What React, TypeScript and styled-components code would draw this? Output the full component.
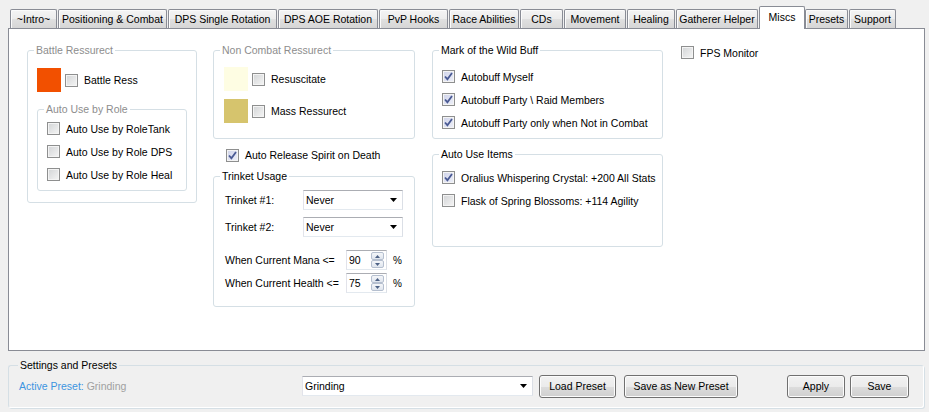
import React from 'react';
import styled, { createGlobalStyle } from 'styled-components';

const GlobalStyle = createGlobalStyle`
  html, body {
    margin: 0;
    padding: 0;
    background: #f0f0f0;
  }
  body {
    font-family: "Liberation Sans", Arial, sans-serif;
    font-size: 10.5px;
    color: #000000;
  }
  * {
    box-sizing: border-box;
  }
`;

const Window = styled.div`
  width: 929px;
  height: 412px;
  padding-top: 6px;
  display: flex;
  flex-direction: column;
  overflow: hidden;
  background: #f0f0f0;
`;

const TabStrip = styled.div`
  display: flex;
  align-items: flex-end;
  height: 22px;
  padding-left: 10px;
`;

const Tab = styled.div<{ $width: number; $active?: boolean; $gap: number }>`
  width: ${(p) => p.$width}px;
  height: ${(p) => (p.$active ? 23 : 19)}px;
  margin-right: ${(p) => p.$gap}px;
  margin-bottom: ${(p) => (p.$active ? -1 : 0)}px;
  padding-bottom: ${(p) => (p.$active ? 3 : 0)}px;
  border: 1px solid #898c95;
  border-bottom: none;
  border-radius: 2px 2px 0 0;
  background: ${(p) =>
    p.$active ? '#ffffff' : 'linear-gradient(#f4f4f4, #ececec 50%, #e0e0e0 50%, #d6d6d6)'};
  box-shadow: ${(p) => (p.$active ? 'none' : 'inset 1px 1px 0 #fbfbfb')};
  display: flex;
  align-items: center;
  justify-content: center;
  white-space: nowrap;
  position: relative;
  z-index: ${(p) => (p.$active ? 1 : 0)};
`;

const Panel = styled.div`
  margin-left: 8px;
  width: 917px;
  height: 323px;
  border: 1px solid #898c95;
  background: #ffffff;
  padding: 15px 0 0 18px;
  display: flex;
  align-items: flex-start;
`;

const Column = styled.div<{ $width?: number; $offset?: number }>`
  width: ${(p) => (p.$width ? `${p.$width}px` : 'auto')};
  margin-left: ${(p) => p.$offset ?? 0}px;
  display: flex;
  flex-direction: column;
`;

const Group = styled.fieldset<{ $height: number; $top?: number }>`
  margin: ${(p) => p.$top ?? 0}px 0 0 0;
  padding: 0;
  min-width: 0;
  width: 100%;
  height: ${(p) => p.$height}px;
  border: 1px solid #d5dfe5;
  border-radius: 3px;
`;

const Legend = styled.legend<{ $muted?: boolean; $inset?: number }>`
  margin-left: ${(p) => p.$inset ?? 6}px;
  padding: 0 2px;
  line-height: 13px;
  color: ${(p) => (p.$muted ? '#8d8d8d' : '#000000')};
`;

const GroupBody = styled.div<{ $pad: string }>`
  padding: ${(p) => p.$pad};
  display: flex;
  flex-direction: column;
`;

const CheckRow = styled.div<{ $height?: number; $top?: number; $indent?: number }>`
  display: flex;
  align-items: center;
  gap: 6px;
  height: ${(p) => p.$height ?? 23}px;
  margin-top: ${(p) => p.$top ?? 0}px;
  padding-left: ${(p) => p.$indent ?? 0}px;
  white-space: nowrap;
`;

const Box = styled.span<{ $checked?: boolean }>`
  width: 13px;
  height: 13px;
  flex: none;
  border: 1px solid #8e8f8f;
  box-shadow: inset 0 0 0 1px #f4f4f4;
  background: ${(p) =>
    p.$checked
      ? 'linear-gradient(135deg, #cfd3ea, #eef0f8)'
      : 'linear-gradient(135deg, #d2d4d6, #f5f5f5)'};
  display: flex;
  align-items: center;
  justify-content: center;
`;

const SwatchRow = styled.div<{ $top?: number }>`
  display: flex;
  align-items: center;
  gap: 4px;
  margin-top: ${(p) => p.$top ?? 0}px;
  white-space: nowrap;
`;

const Swatch = styled.span<{ $color: string }>`
  width: 24px;
  height: 24px;
  flex: none;
  background: ${(p) => p.$color};
`;

const SwatchLabel = styled.span`
  margin-left: 2px;
`;

const FieldRow = styled.div<{ $top?: number; $labelWidth: number }>`
  display: flex;
  align-items: center;
  height: 20px;
  margin-top: ${(p) => p.$top ?? 0}px;
  & > span:first-child {
    width: ${(p) => p.$labelWidth}px;
    flex: none;
    white-space: nowrap;
  }
`;

const Combo = styled.div<{ $width: number }>`
  width: ${(p) => p.$width}px;
  height: 20px;
  border: 1px solid #abadb3;
  border-color: #abadb3 #dbdfe6 #e3e9ef #e2e3ea;
  background: #ffffff;
  display: flex;
  align-items: center;
  justify-content: space-between;
  padding: 0 5px 0 2px;
`;

const Spin = styled.div`
  width: 41px;
  height: 20px;
  border: 1px solid #abadb3;
  border-color: #abadb3 #dbdfe6 #e3e9ef #e2e3ea;
  background: #ffffff;
  display: flex;
  align-items: center;
  justify-content: space-between;
  padding: 1px 2px 1px 2px;
`;

const SpinButtons = styled.div`
  width: 13px;
  height: 16px;
  display: flex;
  flex-direction: column;
`;

const SpinButton = styled.span`
  flex: 1;
  border: 1px solid #b5bfcf;
  border-radius: 2px;
  background: linear-gradient(#f4f6f9, #dfe5ee);
  display: flex;
  align-items: center;
  justify-content: center;
`;

const Percent = styled.span`
  margin-left: 6px;
  font-size: 10px;
`;

const BottomGroup = styled.fieldset`
  margin: 8px 0 0 8px;
  padding: 0;
  width: 916px;
  height: 49px;
  min-width: 0;
  border: 1px solid #d5dfe5;
  border-right-color: #ffffff;
  border-bottom-color: #ffffff;
  border-radius: 3px;
  box-shadow: 1px 1px 0 #d5dfe5;
`;

const BottomBar = styled.div`
  display: flex;
  align-items: center;
  height: 24px;
  margin-top: 2px;
  padding-left: 10px;
`;

const PresetInfo = styled.div`
  width: 283px;
  flex: none;
  color: #a0a0a0;
`;

const Accent = styled.span`
  color: #3d95e0;
`;

const Button = styled.div<{ $width: number; $gap: number }>`
  width: ${(p) => p.$width}px;
  height: 23px;
  margin-left: ${(p) => p.$gap}px;
  border: 1px solid #707070;
  border-radius: 3px;
  background: linear-gradient(#f2f2f2, #ebebeb 50%, #dddddd 50%, #cfcfcf);
  box-shadow: inset 0 0 0 1px #fcfcfc;
  display: flex;
  align-items: center;
  justify-content: center;
  white-space: nowrap;
`;

const Check = ({ checked }: { checked?: boolean }) => (
  <Box $checked={checked}>
    {checked && (
      <svg width="9" height="9" viewBox="0 0 9 9">
        <path d="M1 4.5 L3.4 7.2 L8 1" fill="none" stroke="#4a5a94" strokeWidth="1.8" />
      </svg>
    )}
  </Box>
);

const Arrow = () => (
  <svg width="7" height="4" viewBox="0 0 7 4">
    <path d="M0 0 H7 L3.5 4 Z" fill="#000000" />
  </svg>
);

const SpinArrow = ({ up }: { up?: boolean }) => (
  <svg width="5" height="3" viewBox="0 0 5 3">
    <path d={up ? 'M0 3 H5 L2.5 0 Z' : 'M0 0 H5 L2.5 3 Z'} fill="#4d6185" />
  </svg>
);

const tabs = [
  { label: '~Intro~', width: 47, gap: 1 },
  { label: 'Positioning & Combat', width: 109, gap: 1 },
  { label: 'DPS Single Rotation', width: 109, gap: 1 },
  { label: 'DPS AOE Rotation', width: 100, gap: 1 },
  { label: 'PvP Hooks', width: 69, gap: 1 },
  { label: 'Race Abilities', width: 70, gap: 1 },
  { label: 'CDs', width: 43, gap: 1 },
  { label: 'Movement', width: 62, gap: 1 },
  { label: 'Healing', width: 48, gap: 1 },
  { label: 'Gatherer Helper', width: 82, gap: 1 },
  { label: 'Miscs', width: 46, gap: 0, active: true },
  { label: 'Presets', width: 43, gap: 1 },
  { label: 'Support', width: 47, gap: 0 },
];

const CheckItem = ({ label, checked }: { label: string; checked?: boolean }) => (
  <CheckRow>
    <Check checked={checked} />
    <span>{label}</span>
  </CheckRow>
);

const SpinBox = ({ value }: { value: string }) => (
  <Spin>
    <span>{value}</span>
    <SpinButtons>
      <SpinButton>
        <SpinArrow up />
      </SpinButton>
      <SpinButton>
        <SpinArrow />
      </SpinButton>
    </SpinButtons>
  </Spin>
);

const App: React.FC = () => (
  <>
    <GlobalStyle />
    <Window>
      <TabStrip>
        {tabs.map((t) => (
          <Tab key={t.label} $width={t.width} $gap={t.gap} $active={t.active}>
            {t.label}
          </Tab>
        ))}
      </TabStrip>

      <Panel>
        <Column $width={170}>
          <Group $height={159}>
            <Legend $muted>Battle Ressurect</Legend>
            <GroupBody $pad="11px 9px 0 9px">
              <SwatchRow>
                <Swatch $color="#f25000" />
                <Check />
                <SwatchLabel>Battle Ress</SwatchLabel>
              </SwatchRow>
              <Group $height={88} $top={11}>
                <Legend $muted>Auto Use by Role</Legend>
                <GroupBody $pad="1px 9px 0 9px">
                  <CheckItem label="Auto Use by RoleTank" />
                  <CheckItem label="Auto Use by Role DPS" />
                  <CheckItem label="Auto Use by Role Heal" />
                </GroupBody>
              </Group>
            </GroupBody>
          </Group>
        </Column>

        <Column $width={202} $offset={16}>
          <Group $height={95}>
            <Legend $muted>Non Combat Ressurect</Legend>
            <GroupBody $pad="10px 10px 0 10px">
              <SwatchRow>
                <Swatch $color="#fefde3" />
                <Check />
                <SwatchLabel>Resuscitate</SwatchLabel>
              </SwatchRow>
              <SwatchRow $top={8}>
                <Swatch $color="#d6c46d" />
                <Check />
                <SwatchLabel>Mass Ressurect</SwatchLabel>
              </SwatchRow>
            </GroupBody>
          </Group>
          <CheckRow $height={22} $top={5} $indent={13}>
            <Check checked />
            <span>Auto Release Spirit on Death</span>
          </CheckRow>
          <Group $height={137} $top={4}>
            <Legend>Trinket Usage</Legend>
            <GroupBody $pad="7px 11px 0 11px">
              <FieldRow $labelWidth={78}>
                <span>Trinket #1:</span>
                <Combo $width={100}>
                  <span>Never</span>
                  <Arrow />
                </Combo>
              </FieldRow>
              <FieldRow $labelWidth={78} $top={7}>
                <span>Trinket #2:</span>
                <Combo $width={100}>
                  <span>Never</span>
                  <Arrow />
                </Combo>
              </FieldRow>
              <FieldRow $labelWidth={121} $top={13}>
                <span>When Current Mana &lt;=</span>
                <SpinBox value="90" />
                <Percent>%</Percent>
              </FieldRow>
              <FieldRow $labelWidth={121} $top={3}>
                <span>When Current Health &lt;=</span>
                <SpinBox value="75" />
                <Percent>%</Percent>
              </FieldRow>
            </GroupBody>
          </Group>
        </Column>

        <Column $width={231} $offset={17}>
          <Group $height={95}>
            <Legend>Mark of the Wild Buff</Legend>
            <GroupBody $pad="8px 9px 0 9px">
              <CheckItem label="Autobuff Myself" checked />
              <CheckItem label="Autobuff Party \ Raid Members" checked />
              <CheckItem label="Autobuff Party only when Not in Combat" checked />
            </GroupBody>
          </Group>
          <Group $height={99} $top={9}>
            <Legend>Auto Use Items</Legend>
            <GroupBody $pad="5px 9px 0 9px">
              <CheckItem label="Oralius Whispering Crystal: +200 All Stats" checked />
              <CheckItem label="Flask of Spring Blossoms: +114 Agility" />
            </GroupBody>
          </Group>
        </Column>

        <Column $offset={18}>
          <CheckRow $height={15} $top={1}>
            <Check />
            <span>FPS Monitor</span>
          </CheckRow>
        </Column>
      </Panel>

      <BottomGroup>
        <Legend $inset={9}>Settings and Presets</Legend>
        <BottomBar>
          <PresetInfo>
            <Accent>Active Preset:</Accent> Grinding
          </PresetInfo>
          <Combo $width={231}>
            <span>Grinding</span>
            <Arrow />
          </Combo>
          <Button $width={77} $gap={6}>Load Preset</Button>
          <Button $width={114} $gap={8}>Save as New Preset</Button>
          <Button $width={58} $gap={49}>Apply</Button>
          <Button $width={59} $gap={5}>Save</Button>
        </BottomBar>
      </BottomGroup>
    </Window>
  </>
);

export default App;
